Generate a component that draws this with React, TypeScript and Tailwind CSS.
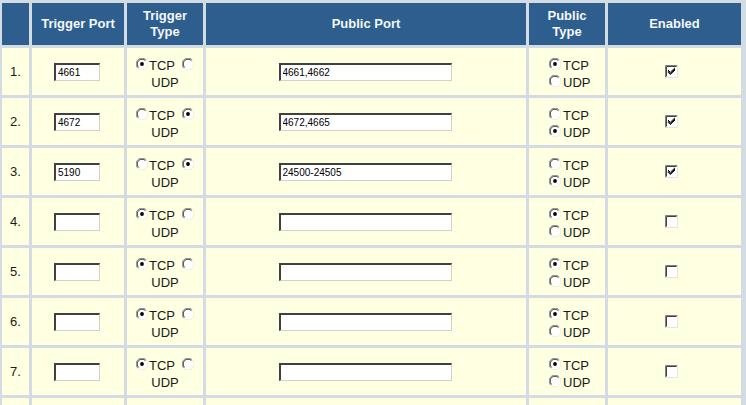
type Row = {
  trigger: string;
  triggerUdp: boolean;
  pub: string;
  pubUdp: boolean;
  enabled: boolean;
};

const rows: Row[] = [
  { trigger: '4661', triggerUdp: false, pub: '4661,4662', pubUdp: false, enabled: true },
  { trigger: '4672', triggerUdp: true, pub: '4672,4665', pubUdp: true, enabled: true },
  { trigger: '5190', triggerUdp: true, pub: '24500-24505', pubUdp: true, enabled: true },
  { trigger: '', triggerUdp: false, pub: '', pubUdp: false, enabled: false },
  { trigger: '', triggerUdp: false, pub: '', pubUdp: false, enabled: false },
  { trigger: '', triggerUdp: false, pub: '', pubUdp: false, enabled: false },
  { trigger: '', triggerUdp: false, pub: '', pubUdp: false, enabled: false },
];

function Radio({ on }: { on: boolean }) {
  return (
    <svg width="12" height="12" viewBox="0 0 12 12" className="shrink-0">
      <circle cx="6" cy="6" r="5.5" fill="#fff" />
      <path d="M1.8 10.2 A5.6 5.6 0 0 1 10.2 1.8" stroke="#8a8a8a" strokeWidth="1" fill="none" />
      <path d="M2.6 9.4 A4.6 4.6 0 0 1 9.4 2.6" stroke="#3a3a3a" strokeWidth="1" fill="none" />
      <path d="M10.2 1.8 A5.6 5.6 0 0 1 1.8 10.2" stroke="#ecebe4" strokeWidth="1" fill="none" />
      {on && <circle cx="6" cy="6" r="1.9" fill="#000" />}
    </svg>
  );
}

function Check({ on }: { on: boolean }) {
  return (
    <svg width="13" height="13" viewBox="0 0 13 13">
      <rect x="0" y="0" width="13" height="13" fill="#fff" />
      <path d="M0.5 12.5 V0.5 H12.5" stroke="#808080" fill="none" />
      <path d="M1.5 11.5 V1.5 H11.5" stroke="#404040" fill="none" />
      <path d="M12.5 0.5 V12.5 H0.5" stroke="#e6e6e0" fill="none" />
      {on && <path d="M3 5 L5.3 7.3 L10 2.8 M3 6.2 L5.3 8.5 L10 4 M3 7.2 L5.3 9.5 L10 5" stroke="#000" strokeWidth="1" fill="none" />}
    </svg>
  );
}

function Field({ value, width }: { value: string; width: string }) {
  return (
    <input
      readOnly
      value={value}
      className={`${width} h-[18px] bg-white px-[2px] text-[10px] leading-none text-black outline-none border-t-2 border-l-2 border-b border-r border-t-[#404040] border-l-[#404040] border-b-[#d4d0c8] border-r-[#d4d0c8]`}
    />
  );
}

const head = 'flex items-center justify-center bg-[#2d5e8d] text-center text-[13px] font-bold leading-[16px] text-[#f4f6f8]';
const cell = 'flex items-center justify-center bg-[#ffffe1] h-[47px]';

export default function App() {
  return (
    <div className="h-[405px] w-[746px] overflow-hidden bg-[#d3dbe3] pl-[2px] pt-[3px] font-['Liberation_Sans',Arial,sans-serif] text-[13px] text-[#1a1a1a]">
      <div className="grid grid-cols-[27px_92px_76px_320px_76px_133px] gap-[3px]">
        <div className={`${head} h-[42px]`} />
        <div className={head}>Trigger Port</div>
        <div className={head}>Trigger<br />Type</div>
        <div className={head}>Public Port</div>
        <div className={head}>Public<br />Type</div>
        <div className={head}>Enabled</div>

        {rows.map((r, i) => (
          <div key={i} className="contents">
            <div className={cell}>{i + 1}.</div>
            <div className={`${cell} pr-[2px]`}>
              <Field value={r.trigger} width="w-[46px]" />
            </div>
            <div className={`${cell} flex-col pt-[4px] leading-[17px]`}>
              <div className="flex items-start">
                <span className="mt-[1px]"><Radio on={!r.triggerUdp} /></span>
                <span className="ml-[1px]">TCP</span>
                <span className="ml-[7px] mt-[1px]"><Radio on={r.triggerUdp} /></span>
              </div>
              <div>UDP</div>
            </div>
            <div className={`${cell} pr-[2px]`}>
              <Field value={r.pub} width="w-[173px]" />
            </div>
            <div className={`${cell} flex-col items-start pl-[20px] pt-[4px] leading-[17px]`}>
              <div className="flex items-start">
                <span className="mt-[1px]"><Radio on={!r.pubUdp} /></span>
                <span className="ml-[2px]">TCP</span>
              </div>
              <div className="flex items-start">
                <span className="mt-[1px]"><Radio on={r.pubUdp} /></span>
                <span className="ml-[2px]">UDP</span>
              </div>
            </div>
            <div className={`${cell} pr-[6px]`}>
              <Check on={r.enabled} />
            </div>
          </div>
        ))}

        {/* next row, only its top edge is visible */}
        <div className={cell} />
        <div className={cell} />
        <div className={cell} />
        <div className={cell} />
        <div className={cell} />
        <div className={cell} />
      </div>
    </div>
  );
}
